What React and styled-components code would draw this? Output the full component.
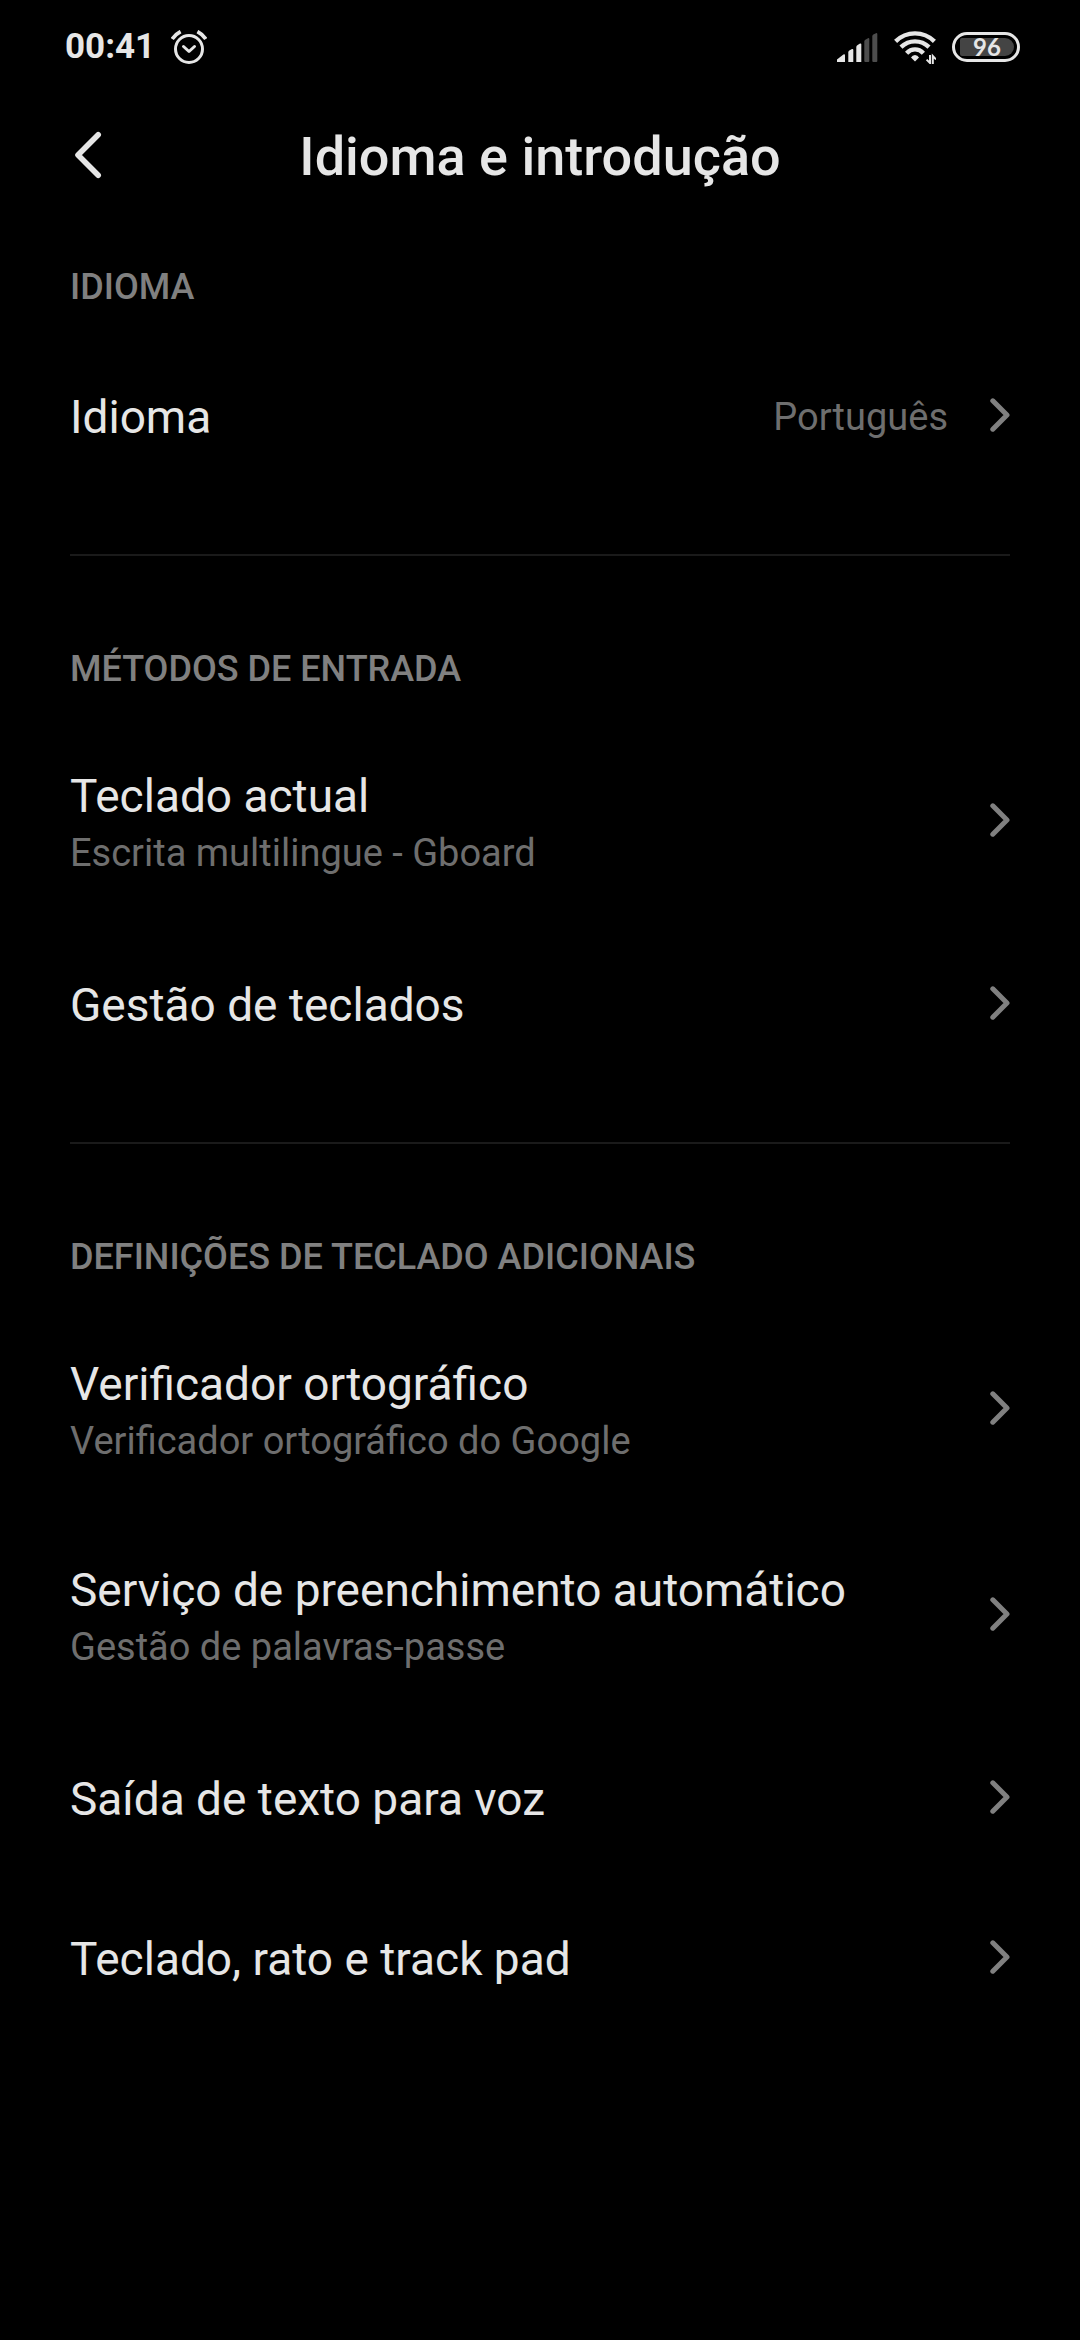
import React from "react";
import styled, { createGlobalStyle } from "styled-components";

const GlobalStyle = createGlobalStyle`
  * {
    box-sizing: border-box;
  }

  body {
    margin: 0;
    background-color: #000;
    color: #e6e6e6;
    font-family: Roboto, "Noto Sans", sans-serif;
  }
`;

const Container = styled.div`
  min-height: 100vh;
  background-color: #000;
`;

const StatusBar = styled.div`
  height: 94px;
  padding: 0 60px 0 65px;
  display: flex;
  align-items: center;
  justify-content: space-between;
`;

const StatusGroup = styled.div`
  display: flex;
  align-items: center;
  gap: 16px;
`;

const Clock = styled.span`
  font-size: 35px;
  line-height: 42px;
  font-weight: 700;
`;

const Battery = styled.div`
  width: 68px;
  height: 30px;
  padding: 3px 3px 3px 5px;
  border: 3px solid #e6e6e6;
  border-radius: 15px;
`;

const BatteryLevel = styled.div`
  height: 18px;
  display: flex;
  align-items: center;
  justify-content: center;
  border-radius: 2px 9px 9px 2px;
  background-color: #444;
  font-family: Lato, sans-serif;
  font-size: 24px;
  line-height: 18px;
  font-weight: 700;
`;

const Header = styled.header`
  height: 126px;
  padding: 0 70px;
  display: grid;
  grid-template-columns: 60px 1fr 60px;
  align-items: center;
`;

const BackButton = styled.button`
  height: 60px;
  padding: 0 0 4px 4px;
  display: flex;
  align-items: center;
  border: none;
  background: none;
  color: #e6e6e6;
  cursor: pointer;
`;

const Title = styled.h1`
  margin: 0;
  font-size: 54px;
  line-height: 64px;
  font-weight: 500;
  text-align: center;
`;

const List = styled.main`
  padding: 46px 70px 0;
`;

const Section = styled.section`
  & + & {
    margin-top: 59px;
    padding-top: 92px;
    border-top: 2px solid #1a1a1a;
  }
`;

const SectionTitle = styled.h2`
  margin: 0 0 27px;
  font-size: 36px;
  line-height: 42px;
  font-weight: 500;
  color: #808080;
  text-transform: uppercase;
`;

const Row = styled.button`
  width: 100%;
  height: ${(props) => (props.$tall ? "206px" : "160px")};
  padding: 0;
  display: flex;
  align-items: center;
  gap: 42px;
  border: none;
  background: none;
  color: #e6e6e6;
  font-family: inherit;
  text-align: left;
  cursor: pointer;
`;

const Texts = styled.span`
  flex: 1;
  padding-top: 4px;
  display: flex;
  flex-direction: column;
  gap: 8px;
`;

const Label = styled.span`
  font-size: 46px;
  line-height: 54px;
`;

const Summary = styled.span`
  font-size: 38px;
  line-height: 44px;
  color: #6e6e6e;
`;

const Value = styled(Summary)`
  padding-top: 4px;
`;

const AlarmIcon = () => (
  <svg width="36" height="35" viewBox="0 0 36 35" fill="none" stroke="#e6e6e6" strokeWidth="3" aria-hidden="true">
    <circle cx="18" cy="19" r="13.5" />
    <path d="M12.5 16.5L18 21.5L23.5 16.5" strokeLinecap="round" strokeLinejoin="round" />
    <path d="M1.2 9Q4.2 4.4 9.6 1.6M34.8 9Q31.8 4.4 26.4 1.6" strokeWidth="3.8" />
  </svg>
);

const SignalIcon = () => (
  <svg width="41" height="29" viewBox="0 0 41 29" fill="#e6e6e6" aria-hidden="true">
    <path d="M0 29V26.5L6.4 21.6Q8 20.8 8 22.4V29Z" />
    <path d="M11.3 29V19.4Q11.3 18.2 12.3 17.6L15 16Q16.3 15.6 16.3 17V29Z" />
    <path d="M19.3 29V14Q19.3 12.8 20.3 12.2L23 10.6Q24.3 10.2 24.3 11.6V29Z" />
    <g fill="#4d4d4d">
      <path d="M27.3 28V8.6Q27.3 7.4 28.3 6.8L31 5.2Q32.3 4.8 32.3 6.2V28Q32.3 29 31.3 29H28.3Q27.3 29 27.3 28Z" />
      <path d="M35.3 28V3.4Q35.3 2.2 36.3 1.6L39 0.2Q40.3 -0.2 40.3 1.2V28Q40.3 29 39.3 29H36.3Q35.3 29 35.3 28Z" />
    </g>
  </svg>
);

const WifiIcon = () => (
  <svg width="42" height="33" viewBox="0 0 42 33" fill="none" stroke="#e6e6e6" strokeWidth="4.4" aria-hidden="true">
    <path d="M1.6 10.4Q9.8 2.4 21 2.4Q32.2 2.4 40.4 10.4" />
    <path d="M7 16.2Q13 10.4 21 10.4Q29 10.4 35 16.2" />
    <path d="M12.6 22.2Q16.2 18.4 21 18.4Q25.8 18.4 29.4 22.2" />
    <path d="M17 26.6Q18.4 24 21 24Q23.6 24 25 26.6L21 30.4Z" fill="#e6e6e6" stroke="none" />
    <path d="M36 24V32L32.6 28.6M38.8 33V25L42 28.4" strokeWidth="2" />
  </svg>
);

const BackIcon = () => (
  <svg width="28" height="48" viewBox="0 0 28 48" fill="none" stroke="currentColor" strokeWidth="5.6" aria-hidden="true">
    <path d="M24.2 3.8L4 24L24.2 44.2" strokeLinecap="round" strokeLinejoin="round" />
  </svg>
);

const ChevronIcon = () => (
  <svg width="20" height="34" viewBox="0 0 20 34" fill="none" stroke="#808080" strokeWidth="5" aria-hidden="true">
    <path d="M2.8 2.8L17 17L2.8 31.2" strokeLinecap="round" strokeLinejoin="round" />
  </svg>
);

const sections = [
  {
    title: "Idioma",
    items: [{ label: "Idioma", value: "Português" }],
  },
  {
    title: "Métodos de entrada",
    items: [
      { label: "Teclado actual", summary: "Escrita multilingue - Gboard" },
      { label: "Gestão de teclados" },
    ],
  },
  {
    title: "Definições de teclado adicionais",
    items: [
      { label: "Verificador ortográfico", summary: "Verificador ortográfico do Google" },
      { label: "Serviço de preenchimento automático", summary: "Gestão de palavras-passe" },
      { label: "Saída de texto para voz" },
      { label: "Teclado, rato e track pad" },
    ],
  },
];

const App = () => {
  return (
    <Container>
      <GlobalStyle />
      <StatusBar>
        <StatusGroup>
          <Clock>00:41</Clock>
          <AlarmIcon />
        </StatusGroup>
        <StatusGroup>
          <SignalIcon />
          <WifiIcon />
          <Battery>
            <BatteryLevel>96</BatteryLevel>
          </Battery>
        </StatusGroup>
      </StatusBar>

      <Header>
        <BackButton aria-label="Voltar">
          <BackIcon />
        </BackButton>
        <Title>Idioma e introdução</Title>
      </Header>

      <List>
        {sections.map((section) => (
          <Section key={section.title}>
            <SectionTitle>{section.title}</SectionTitle>
            {section.items.map((item) => (
              <Row key={item.label} $tall={!!item.summary}>
                <Texts>
                  <Label>{item.label}</Label>
                  {item.summary && <Summary>{item.summary}</Summary>}
                </Texts>
                {item.value && <Value>{item.value}</Value>}
                <ChevronIcon />
              </Row>
            ))}
          </Section>
        ))}
      </List>
    </Container>
  );
};

export default App;
